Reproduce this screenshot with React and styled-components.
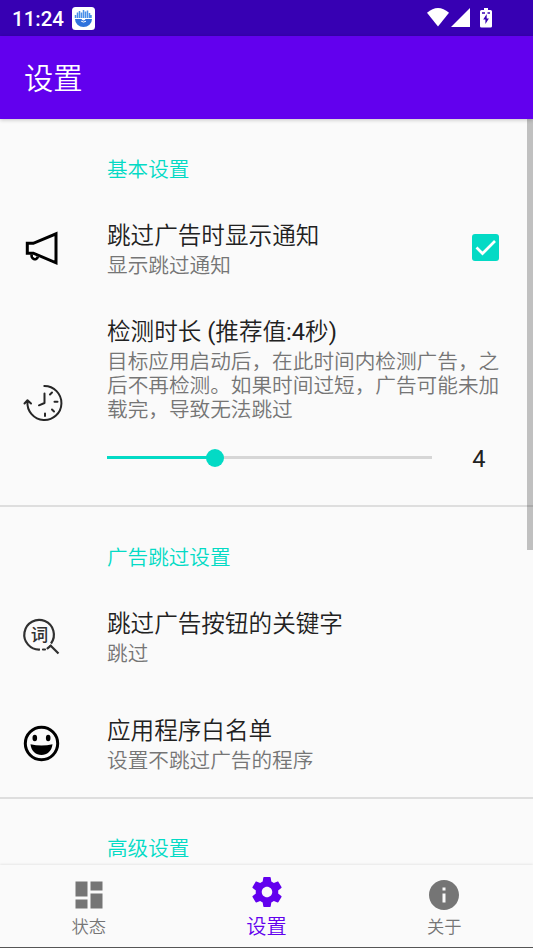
import React from "react";
import styled, { createGlobalStyle } from "styled-components";

const PRIMARY = "#6200ee";
const ACCENT = "#03dac5";

const GlobalStyle = createGlobalStyle`
  * { box-sizing: border-box; }
  html, body { margin: 0; padding: 0; overflow: hidden; }
  body { background: #fafafa; font-family: Roboto, "Noto Sans CJK SC", sans-serif; font-weight: 350; }
`;

const Screen = styled.div`
  position: relative;
  display: flex;
  flex-direction: column;
  width: 533px;
  height: 948px;
  overflow: hidden;
  background: #fafafa;
`;

const StatusBar = styled.header`
  display: flex;
  align-items: center;
  flex: none;
  height: 36px;
  padding: 0 41px 0 12px;
  background: #3700b3;
  color: #fff;
`;

const Clock = styled.span`
  width: 60px;
  font-size: 20.5px;
  font-weight: 500;
  line-height: 24px;
  padding-top: 1px;
  white-space: nowrap;
`;

const StatusIcons = styled.div`
  display: flex;
  align-items: center;
  margin-left: auto;
  padding-bottom: 1px;
`;

const AppBar = styled.div`
  display: flex;
  align-items: center;
  flex: none;
  z-index: 1;
  height: 82.5px;
  padding: 3px 0 0 24px;
  background: ${PRIMARY};
  color: #fff;
  box-shadow: 0 1px 4px rgba(0, 0, 0, 0.22);
`;

const AppTitle = styled.h1`
  margin: 0;
  font-size: 29.3px;
  font-weight: 350;
  line-height: 40px;
`;

const Content = styled.main`
  flex: 1;
  min-height: 0;
  overflow: hidden;
`;

const Section = styled.section`
  border-bottom: 2px solid #dedede;
`;

const SectionTitle = styled.h2`
  height: ${(p) => p.$height || 75.5}px;
  margin: 0;
  padding: ${(p) => p.$top || 36}px 0 0 107px;
  color: ${ACCENT};
  font-size: 20.6px;
  font-weight: 350;
  line-height: 30px;
`;

const Row = styled.div`
  display: flex;
  align-items: center;
  height: ${(p) => p.$height || 108}px;
`;

const IconCell = styled.div`
  flex: none;
  width: 107px;
  padding-left: 20px;
  display: flex;
`;

const RowBody = styled.div`
  flex: 1;
  min-width: 0;
  padding-top: ${(p) => p.$top || 0}px;
  padding-bottom: ${(p) => p.$bottom || 0}px;
`;

const RowTitle = styled.div`
  color: #212121;
  font-size: 23.6px;
  line-height: 32px;
  white-space: nowrap;
`;

const Latin = styled.span`
  font-weight: 400;
`;

const Summary = styled.div`
  color: #757575;
  font-size: 20.65px;
  line-height: 24px;
  margin-top: 2px;
  white-space: nowrap;
`;

const CheckBox = styled.div`
  display: flex;
  align-items: center;
  justify-content: center;
  width: 27px;
  height: 27px;
  margin-right: 34px;
  border-radius: 3px;
  background: ${ACCENT};
`;

const SliderRow = styled.div`
  display: flex;
  align-items: center;
  height: 32px;
  margin-top: 20px;
`;

const Track = styled.div`
  display: flex;
  align-items: center;
  width: 325px;
  height: 18px;
  background: linear-gradient(#d6d6d6, #d6d6d6) center / 100% 3px no-repeat;
`;

const Fill = styled.div`
  height: 3px;
  background: ${ACCENT};
`;

const Thumb = styled.div`
  width: 18px;
  height: 18px;
  margin-left: -9px;
  border-radius: 50%;
  background: ${ACCENT};
`;

const SliderValue = styled.div`
  width: 94px;
  text-align: center;
  color: #212121;
  font-size: 23.6px;
  font-weight: 400;
  line-height: 30px;
  padding-top: 2px;
`;

const ScrollThumb = styled.div`
  position: absolute;
  top: 119px;
  right: 0;
  width: 6px;
  height: 430.5px;
  background: rgba(0, 0, 0, 0.23);
`;

const BottomNav = styled.nav`
  display: flex;
  flex: none;
  height: 83px;
  background: #fafafa;
  border-bottom: 1px solid #555;
  box-shadow: 0 -1px 2px rgba(0, 0, 0, 0.08);
  z-index: 1;
`;

const NavItem = styled.div`
  display: flex;
  flex: 1;
  flex-direction: column;
  align-items: center;
  padding-top: ${(p) => (p.$active ? 9 : 12)}px;
  color: ${(p) => (p.$active ? PRIMARY : "#757575")};
`;

const NavLabel = styled.span`
  font-size: ${(p) => (p.$active ? 20.2 : 17.3)}px;
  line-height: 24px;
  margin-top: ${(p) => (p.$active ? 5 : 2)}px;
`;

const Glyph = styled.svg`
  display: block;
  flex: none;
  margin-left: ${(p) => p.$gap || 0}px;
`;

const GlyphText = styled.text`
  font-family: "Noto Sans CJK SC", sans-serif;
  font-size: 17.5px;
  font-weight: 500;
  fill: #303030;
`;

const NotificationIcon = () => (
  <Glyph width="23" height="23" viewBox="0 0 23 23">
    <rect width="23" height="23" rx="3.5" fill="#fff" />
    <path d="M3.500 8v3M5.500 5.500V11M7.500 4v7M9.500 5.500V11M11.500 3v8M13.500 4.500V11M15.500 3.500V11M17.500 6v5M19 8v3" stroke="#4a8fe8" strokeWidth="1.500" />
    <path d="M3 12h6.500a2.100 2 0 0 0 4 0H20a8.500 8 0 0 1-17 0z" fill="#2f73dc" />
    <path d="M9.200 14.200q2.400 1.800 4.800 0" fill="none" stroke="#fff" strokeWidth="1" />
  </Glyph>
);

const WifiIcon = () => (
  <Glyph width="22" height="19" viewBox="0 0 22 19">
    <path d="M0 4.800Q11-4.800 22 4.800L11 18.500z" fill="#fff" />
  </Glyph>
);

const SignalIcon = () => (
  <Glyph width="19" height="19" viewBox="0 0 19 19" $gap={2}>
    <path d="M19 0v19H0z" fill="#fff" />
  </Glyph>
);

const BatteryIcon = () => (
  <Glyph width="12" height="20" viewBox="0 0 12 20" $gap={10}>
    <path d="M4 0h4v2h2.500Q12 2 12 3.500v14.800q0 1.200-1.500 1.200h-9Q0 19.500 0 18.300V3.500Q0 2 1.500 2H4z" fill="#fff" />
    <path d="M2 4.300h3v1.400H2zM7.500 4.300h2.500v1.400H7.500zM6.700 6L3.200 11.500h2.200V16l3.500-5.500H6.700z" fill="#3700b3" />
  </Glyph>
);

const MegaphoneIcon = () => (
  <Glyph width="42" height="42" viewBox="0 0 42 42" fill="none" stroke="#000" strokeWidth="3">
    <path d="M7.300 16.300h6L36 6.800v29L13.300 26.200h-6z" />
    <path d="M11.700 27.500a3.200 3.600 0 0 0 6.200 2.200" strokeWidth="2.600" />
  </Glyph>
);

const HistoryIcon = () => (
  <Glyph width="44" height="44" viewBox="0 0 44 44" fill="none" stroke="#262626" strokeWidth="2" strokeLinecap="round" strokeLinejoin="round">
    <path d="M24.300 5A17 17 0 1 1 7.500 20.500M4.500 22.500l3-3.200 3.500 3.200" />
    <path d="M24.500 12.500V22l-5.500 2.300M30 13.500l2-2M34.500 20.800h3M32 28.500l2 2M25 32.500v2.500" />
  </Glyph>
);

const KeywordIcon = () => (
  <Glyph width="42" height="42" viewBox="0.5 0 42 42" fill="none" stroke="#303030" strokeWidth="2.200">
    <path d="M20.500 34.500A14.800 14.800 0 1 1 31.500 28.500M30.500 30l8.500 8.500" />
    <path d="M23.500 34.500h2M28 33.300l3-2.500" strokeLinecap="round" />
    <GlyphText x="11.300" y="25.900" stroke="none">词</GlyphText>
  </Glyph>
);

const SmileIcon = () => (
  <Glyph width="42" height="42" viewBox="0 -1 42 42">
    <circle cx="21.500" cy="20.500" r="16.200" fill="none" stroke="#000" strokeWidth="3" />
    <ellipse cx="14.800" cy="15" rx="2.300" ry="3.200" />
    <ellipse cx="28.200" cy="15" rx="2.300" ry="3.200" />
    <path d="M10.500 21.300q11 2.600 22 0c-.8 7-5.500 10.700-11 10.700s-10.200-3.700-11-10.700z" />
  </Glyph>
);

const DashboardIcon = () => (
  <Glyph width="36" height="36" viewBox="0 0 24 24" fill="currentColor">
    <path d="M3 13h8V3H3v10zm0 8h8v-6H3v6zm10 0h8V11h-8v10zm0-18v6h8V3h-8z" />
  </Glyph>
);

const SettingsIcon = () => (
  <Glyph width="36" height="36" viewBox="0 0 24 24" fill="currentColor">
    <path d="M19.430 12.980c.04-.32.07-.64.07-.98s-.03-.66-.07-.98l2.110-1.650c.19-.15.24-.42.12-.64l-2-3.460c-.12-.22-.39-.3-.61-.22l-2.490 1c-.52-.4-1.080-.73-1.690-.98l-.38-2.650C14.460 2.180 14.250 2 14 2h-4c-.25 0-.46.18-.49.42l-.38 2.650c-.61.25-1.170.59-1.690.98l-2.490-1c-.23-.09-.49 0-.61.22l-2 3.460c-.13.22-.07.49.12.64l2.110 1.650c-.04.32-.07.65-.07.98s.03.66.07.98l-2.110 1.650c-.19.15-.24.42-.12.64l2 3.460c.12.22.39.3.61.22l2.490-1c.52.4 1.080.73 1.690.98l.38 2.650c.03.24.24.42.49.42h4c.25 0 .46-.18.49-.42l.38-2.650c.61-.25 1.170-.59 1.690-.98l2.490 1c.23.09.49 0 .61-.22l2-3.460c.12-.22.07-.49-.12-.64l-2.110-1.650zM12 15.500c-1.930 0-3.500-1.570-3.500-3.500s1.570-3.500 3.500-3.500 3.500 1.570 3.500 3.500-1.570 3.500-3.500 3.500z" />
  </Glyph>
);

const InfoIcon = () => (
  <Glyph width="36" height="36" viewBox="0 0 24 24" fill="currentColor">
    <path d="M12 2C6.480 2 2 6.480 2 12s4.480 10 10 10 10-4.480 10-10S17.520 2 12 2zm1 15h-2v-6h2v6zm0-8h-2V7h2v2z" />
  </Glyph>
);

export default function App() {
  return (
    <Screen>
      <GlobalStyle />
      <StatusBar>
        <Clock>11:24</Clock>
        <NotificationIcon />
        <StatusIcons>
          <WifiIcon />
          <SignalIcon />
          <BatteryIcon />
        </StatusIcons>
      </StatusBar>
      <AppBar>
        <AppTitle>设置</AppTitle>
      </AppBar>
      <Content>
        <Section>
          <SectionTitle $height={75}>基本设置</SectionTitle>
          <Row>
            <IconCell><MegaphoneIcon /></IconCell>
            <RowBody $top={2}>
              <RowTitle>跳过广告时显示通知</RowTitle>
              <Summary>显示跳过通知</Summary>
            </RowBody>
            <CheckBox>
              <Glyph width="27" height="27" viewBox="0 0 27 27">
                <path d="M4.500 13.500l6 6L23 7" fill="none" stroke="#fff" strokeWidth="2.700" />
              </Glyph>
            </CheckBox>
          </Row>
          <Row $height={203.5}>
            <IconCell><HistoryIcon /></IconCell>
            <RowBody $bottom={17}>
              <RowTitle>检测时长<Latin> (</Latin>推荐值<Latin>:4</Latin>秒<Latin>)</Latin></RowTitle>
              <Summary>
                目标应用启动后，在此时间内检测广告，之<br />
                后不再检测。如果时间过短，广告可能未加<br />
                载完，导致无法跳过
              </Summary>
              <SliderRow>
                <Track>
                  <Fill style={{ width: `${(4 / 12) * 100}%` }} />
                  <Thumb />
                </Track>
                <SliderValue>4</SliderValue>
              </SliderRow>
            </RowBody>
          </Row>
        </Section>
        <Section>
          <SectionTitle $height={74.5}>广告跳过设置</SectionTitle>
          <Row>
            <IconCell><KeywordIcon /></IconCell>
            <RowBody $top={2}>
              <RowTitle>跳过广告按钮的关键字</RowTitle>
              <Summary>跳过</Summary>
            </RowBody>
          </Row>
          <Row $height={107.5}>
            <IconCell><SmileIcon /></IconCell>
            <RowBody $top={2}>
              <RowTitle>应用程序白名单</RowTitle>
              <Summary>设置不跳过广告的程序</Summary>
            </RowBody>
          </Row>
        </Section>
        <SectionTitle $top={35}>高级设置</SectionTitle>
      </Content>
      <BottomNav>
        <NavItem><DashboardIcon /><NavLabel>状态</NavLabel></NavItem>
        <NavItem $active><SettingsIcon /><NavLabel $active>设置</NavLabel></NavItem>
        <NavItem><InfoIcon /><NavLabel>关于</NavLabel></NavItem>
      </BottomNav>
      <ScrollThumb />
    </Screen>
  );
}
